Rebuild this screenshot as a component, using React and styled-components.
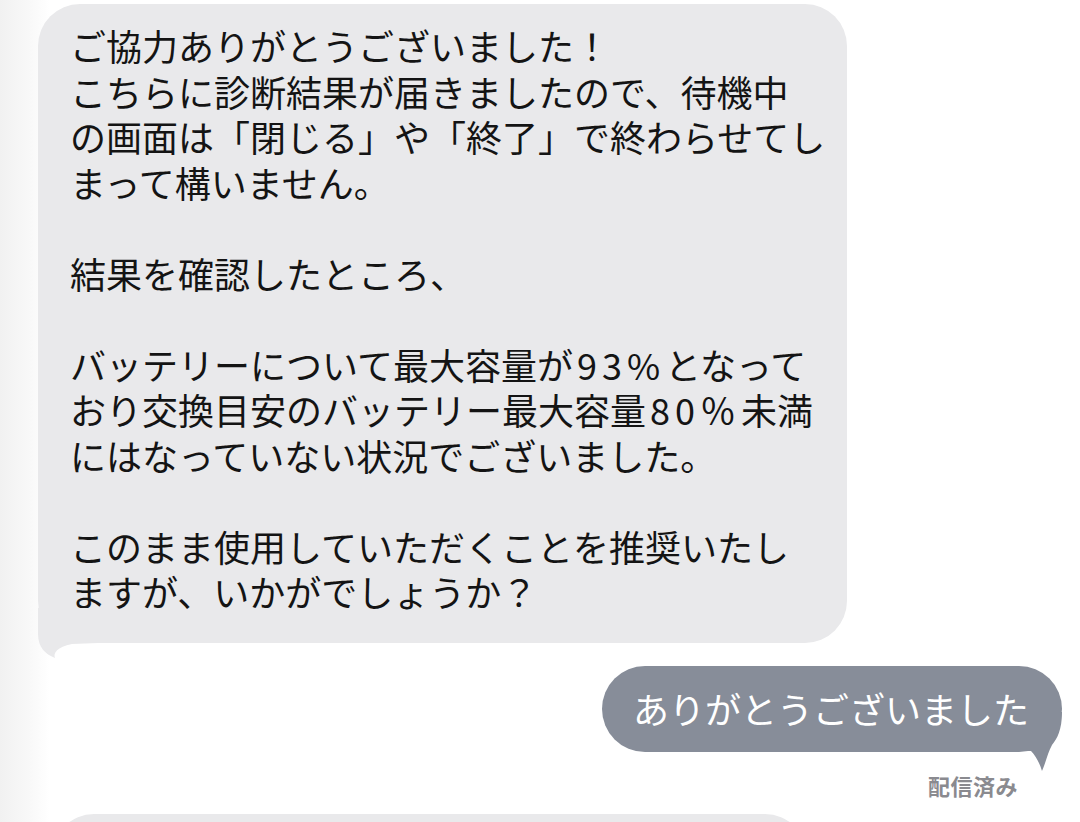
import React from "react";
import styled, { createGlobalStyle } from "styled-components";

const GlobalStyle = createGlobalStyle`
  html, body {
    margin: 0;
    padding: 0;
    height: 100%;
    overflow: hidden;
  }
  body {
    background: linear-gradient(to right, #f1f1f1 0, #f8f8f8 28px, #ffffff 50px);
    font-family: "Noto Sans CJK JP", "Noto Sans", sans-serif;
  }
`;

const App = () => {
  return (
    <>
      <GlobalStyle />
      <Thread>
        <Incoming>
          <Line>ご協力ありがとうございました！</Line>
          <Line>こちらに診断結果が届きましたので、待機中</Line>
          <Line>の画面は「閉じる」や「終了」で終わらせてし</Line>
          <Line>まって構いません。</Line>
          <Line>{"\u00a0"}</Line>
          <Line>結果を確認したところ、</Line>
          <Line>{"\u00a0"}</Line>
          <Line>
            バッテリーについて最大容量が<Num>93%</Num>となって
          </Line>
          <Line>
            おり交換目安のバッテリー最大容量<Num>80％</Num>未満
          </Line>
          <Line>にはなっていない状況でございました。</Line>
          <Line>{"\u00a0"}</Line>
          <Line>このまま使用していただくことを推奨いたし</Line>
          <Line>ますが、いかがでしょうか？</Line>
          <LeftTail viewBox="0 0 60 50" width="60" height="50">
            <path d="M0 0 V26 C0 39 7 46 17 50 C15 45 19 39 34 36 L60 35 V0 Z" />
          </LeftTail>
        </Incoming>

        <OutgoingRow>
          <Outgoing>
            <RightTail viewBox="0 0 60 60" width="60" height="60">
              <path d="M0 0 H60 C60 18 55 27 50 33 C46 40 44 50 40 59 C38 52 34 44 29 39 H0 Z" />
            </RightTail>
            <Label>ありがとうございました</Label>
          </Outgoing>
        </OutgoingRow>
        <Status>配信済み</Status>

        <NextBubble />
      </Thread>
    </>
  );
};
export default App;

// 대화 전체
const Thread = styled.div`
  display: flex;
  flex-direction: column;
  padding-top: 4px;
`;

// 회색 말풍선
const Incoming = styled.div`
  position: relative;
  box-sizing: border-box;
  width: 809px;
  margin-left: 38px;
  padding: 19px 20px 28px 32px;
  background: #e9e9eb;
  border-radius: 42px;
  color: #141414;
  font-size: 36px;
  line-height: 45.5px;
`;

const Line = styled.div`
  white-space: nowrap;
`;

// 숫자 부분은 원본처럼 조금 넓게
const Num = styled.span`
  letter-spacing: 5px;
  margin-left: 4px;
`;

const LeftTail = styled.svg`
  position: absolute;
  left: 0;
  bottom: -15px;
  fill: #e9e9eb;
`;

const OutgoingRow = styled.div`
  display: flex;
  justify-content: flex-end;
  margin-top: 23px;
  padding-right: 18px;
`;

// 보낸 메시지 말풍선
const Outgoing = styled.div`
  position: relative;
  box-sizing: border-box;
  height: 86px;
  padding: 20px 33px 0 31px;
  background: #878d99;
  border-radius: 43px;
  color: #ffffff;
  font-size: 36px;
  line-height: 45.5px;
  white-space: nowrap;
`;

const Label = styled.span`
  position: relative;
  z-index: 1;
`;

const RightTail = styled.svg`
  position: absolute;
  right: 0;
  bottom: -20px;
  fill: #878d99;
`;

const Status = styled.div`
  align-self: flex-end;
  margin-top: 18px;
  margin-right: 62px;
  color: #8a8a8f;
  font-size: 22px;
  font-weight: 700;
  line-height: 30px;
  letter-spacing: 0.5px;
`;

// 아래쪽에 살짝 보이는 다음 말풍선
const NextBubble = styled.div`
  width: 755px;
  height: 120px;
  margin-top: 14px;
  margin-left: 52px;
  background: #e9e9eb;
  border-radius: 42px;
`;
